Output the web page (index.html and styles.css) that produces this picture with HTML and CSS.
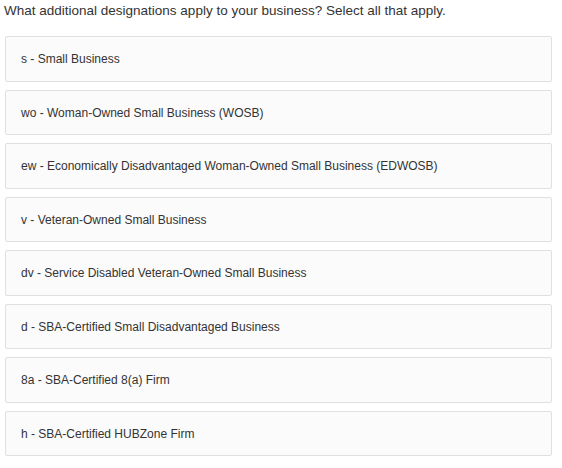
FILE: index.html
```html
<!DOCTYPE html>
<html>
<head>
  <title>Designations</title>
  <link rel="stylesheet" href="styles.css">
</head>
<body>
  <p class="question">What additional designations apply to your business? Select all that apply.</p>

  <div class="options">
    <div class="option">s - Small Business</div>
    <div class="option">wo - Woman-Owned Small Business (WOSB)</div>
    <div class="option">ew - Economically Disadvantaged Woman-Owned Small Business (EDWOSB)</div>
    <div class="option">v - Veteran-Owned Small Business</div>
    <div class="option">dv - Service Disabled Veteran-Owned Small Business</div>
    <div class="option">d - SBA-Certified Small Disadvantaged Business</div>
    <div class="option">8a - SBA-Certified 8(a) Firm</div>
    <div class="option">h - SBA-Certified HUBZone Firm</div>
  </div>
</body>
</html>
```

FILE: styles.css
```css
body {
  font-family: "Liberation Sans", Arial, sans-serif;
  color: #333;
  margin: 0;
  padding: 0 10px 0 4px;
  background: #fff;
}
.question {
  font-size: 13.5px;
  margin: 3px 0 17px 0;
  line-height: 16px;
}
.options {
  display: flex;
  flex-direction: column;
  gap: 8px;
  margin-left: 1px;
}
.option {
  font-size: 12px;
  line-height: 14px;
  padding: 15px;
  height: 13.5px;
  border: 1px solid #e0e0e0;
  border-radius: 2px;
  background-color: #fbfbfb;
}
```
